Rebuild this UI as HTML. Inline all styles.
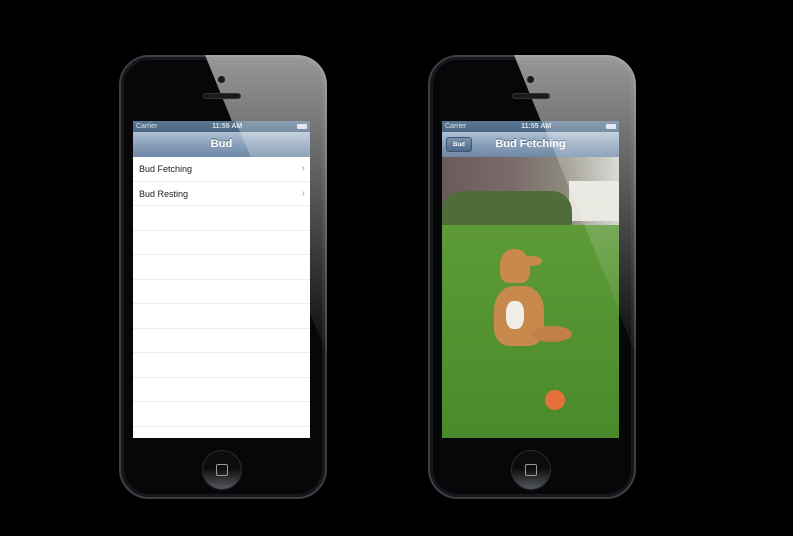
<!DOCTYPE html>
<html><head><style>
*{margin:0;padding:0;box-sizing:border-box}
body{width:793px;height:536px;background:#000;position:relative;overflow:hidden;font-family:"Liberation Sans",sans-serif}
.phone{position:absolute;top:55px;width:208px;height:444px;border-radius:30px;background:#060708;border:2px solid #3c4046;box-shadow:inset 0 0 0 3px #15171a}
.scr{position:absolute;left:12px;top:64px;width:177px;height:317px;background:#fff;overflow:hidden}
.status{height:11px;background:linear-gradient(#5d7893,#4a6582);color:#dbe3ec;font-size:7px;line-height:11px;display:flex;justify-content:space-between;padding:0 3px}
.status b{font-weight:bold}
.status .b{width:10px;height:5px;margin-top:3px;background:#dde;border-radius:1px}
.nav{height:25px;background:linear-gradient(#b0c0d2,#8aa0b9 50%,#6d88a6);color:#fff;font-weight:bold;font-size:11px;text-align:center;line-height:25px;text-shadow:0 -1px 0 #4a607a;position:relative}
.row{height:24.5px;border-bottom:1px solid #ececec;font-size:9px;line-height:24px;padding-left:6px;color:#222;position:relative}
.row span{position:absolute;right:5px;color:#999;font-size:10px}
.cam{position:absolute;left:97px;top:19px;width:7px;height:7px;border-radius:50%;background:#1a1a1a;z-index:2}
.spk{position:absolute;left:82px;top:36px;width:38px;height:6px;border-radius:3px;background:#1a1a1a;border:1px solid #333;z-index:2}
.home{position:absolute;left:81px;top:393px;width:40px;height:40px;border-radius:50%;background:linear-gradient(#0c0c0c 45%,#55585c);border:1px solid #2a2c30}
.home i{position:absolute;left:13px;top:13px;width:12px;height:12px;border:1.5px solid #999;border-radius:2px}
.glare{position:absolute;top:-2px;left:-2px;width:208px;height:444px;border-radius:30px;background:linear-gradient(180deg,rgba(200,200,200,.75),rgba(150,150,150,.35) 45%,rgba(120,120,120,0) 70%);clip-path:polygon(86px 0,208px 0,208px 300px)}
.sg{position:absolute;left:-12px;top:-64px;width:208px;height:444px;background:linear-gradient(180deg,rgba(255,255,255,.35),rgba(255,255,255,.15) 40%,rgba(255,255,255,0) 65%);clip-path:polygon(86px 0,208px 0,208px 300px);pointer-events:none}
.back{position:absolute;left:4px;top:5px;width:26px;height:15px;border-radius:3px;background:linear-gradient(#7d94ae,#4e6a8a);font-size:6px;line-height:15px;border:1px solid #3c5572}
</style></head><body>
<div class="phone" style="left:119px">
 <div class="glare"></div>
 <div class="cam"></div><div class="spk"></div>
 <div class="scr">
  <div class="status"><span>Carrier</span><b>11:55 AM</b><div class="b"></div></div>
  <div class="nav">Bud</div>
  <div class="row">Bud Fetching<span>›</span></div>
  <div class="row">Bud Resting<span>›</span></div>
  <div class="row"></div><div class="row"></div><div class="row"></div><div class="row"></div><div class="row"></div><div class="row"></div><div class="row"></div><div class="row"></div><div class="row"></div>
  <div class="sg" style="clip-path:polygon(86px 0,208px 0,208px 100px,130px 100px)"></div>
 </div>
 <div class="home"><i></i></div>
</div>
<div class="phone" style="left:428px">
 <div class="glare"></div>
 <div class="cam"></div><div class="spk"></div>
 <div class="scr" style="background:#4f8a2c">
  <div class="status"><span>Carrier</span><b>11:55 AM</b><div class="b"></div></div>
  <div class="nav">Bud Fetching<div class="back">Bud</div></div>
  <div style="position:absolute;top:36px;left:0;width:177px;height:70px;background:linear-gradient(90deg,#6a5a5a,#7c6b6a 40%,#8c8a7c 70%,#d0d0cc)"></div>
  <div style="position:absolute;top:60px;left:127px;width:50px;height:40px;background:#e6e4dc"></div>
  <div style="position:absolute;top:70px;left:0;width:130px;height:35px;background:#4f6c3a;border-radius:20px 20px 0 0"></div>
  <div style="position:absolute;top:104px;left:0;width:177px;height:213px;background:linear-gradient(#5e9a38,#4a8a2a)"></div>
  <div style="position:absolute;top:128px;left:58px;width:30px;height:34px;background:#c9894a;border-radius:45% 50% 30% 30%"></div>
  <div style="position:absolute;top:135px;left:80px;width:20px;height:10px;background:#c9894a;border-radius:50%"></div>
  <div style="position:absolute;top:165px;left:52px;width:50px;height:60px;background:#c88a4c;border-radius:40% 40% 30% 30%"></div>
  <div style="position:absolute;top:180px;left:64px;width:18px;height:28px;background:#f0eee6;border-radius:40%"></div>
  <div style="position:absolute;top:205px;left:90px;width:40px;height:16px;background:#c08048;border-radius:50%"></div>
  <div style="position:absolute;top:269px;left:103px;width:20px;height:20px;background:#e2713a;border-radius:50%"></div>
  <div class="sg"></div>
 </div>
 <div class="home"><i></i></div>
</div>
</body></html>
